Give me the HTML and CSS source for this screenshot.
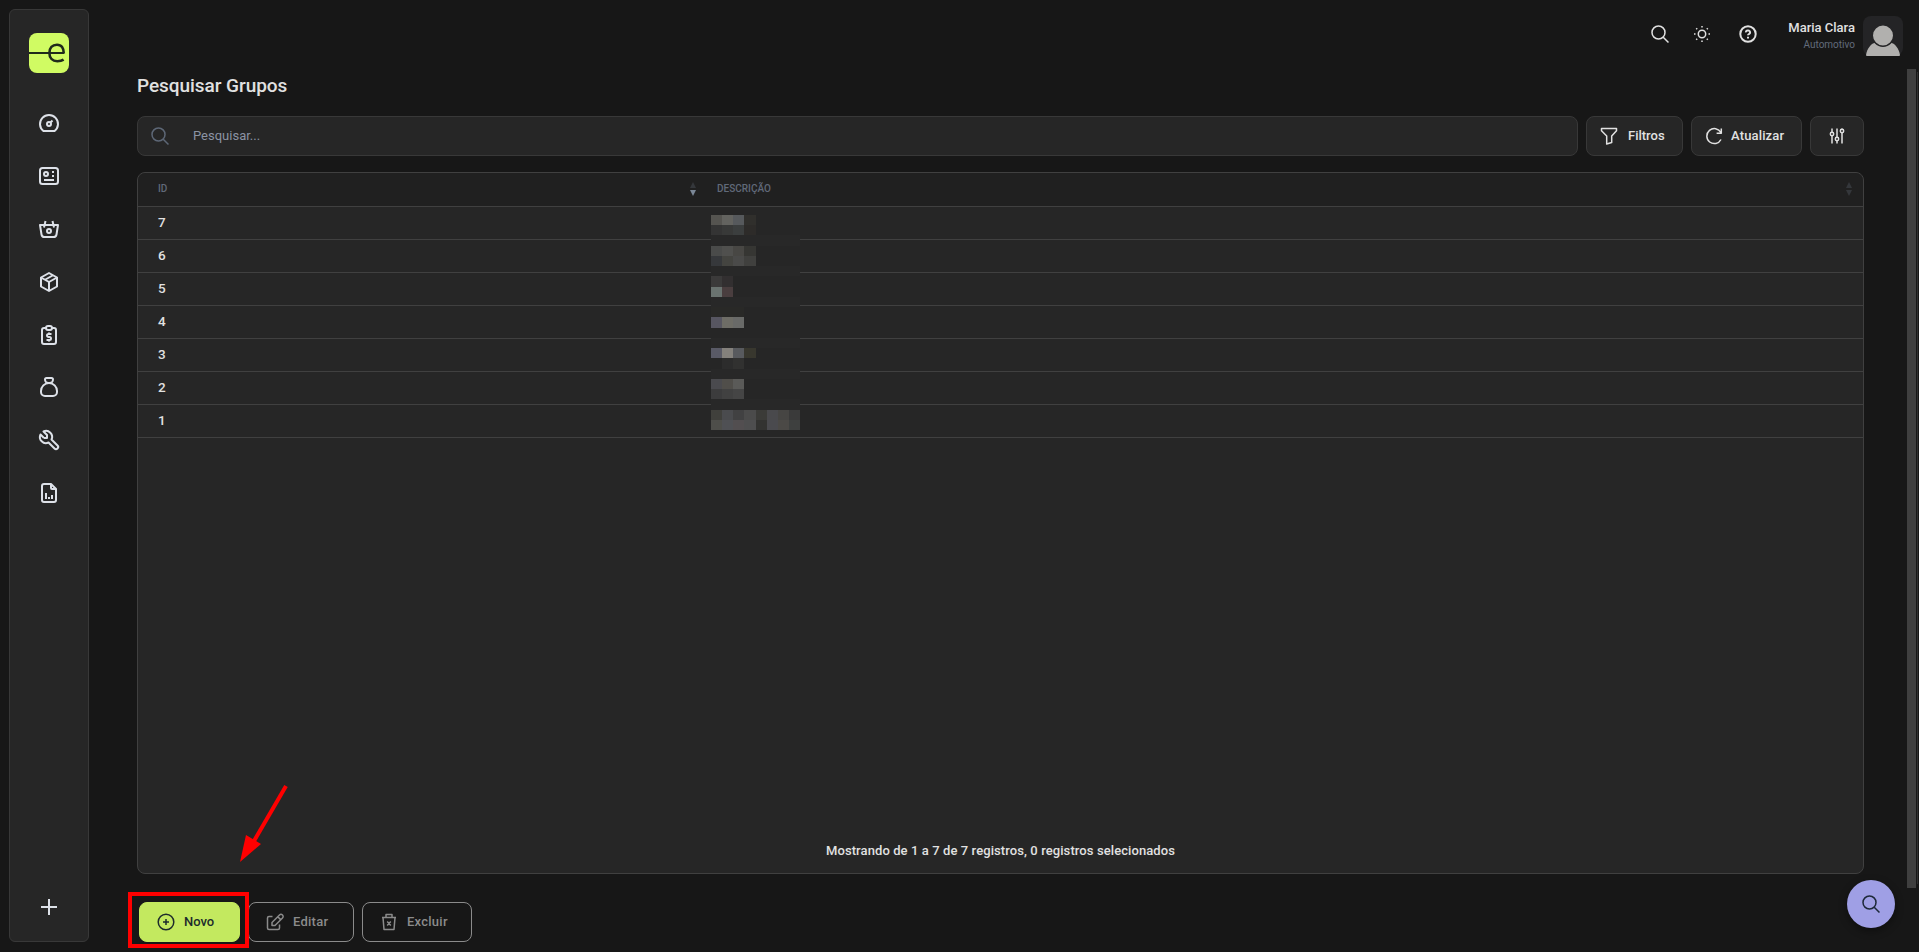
FILE: index.html
```
<!DOCTYPE html>
<html lang="pt-BR">
<head>
  <meta charset="UTF-8" />
  <meta name="viewport" content="width=device-width, initial-scale=1" />
  <title>Pesquisar Grupos</title>
  <link rel="stylesheet" href="styles.css">
</head>
<body>
  <div class="app">
    <!-- Sidebar -->
    <aside class="sidebar">
      <svg class="logo" viewBox="0 0 40 40">
        <rect width="40" height="40" rx="8" fill="#d0fb63"/>
        <path d="M0 20H35" stroke="#1f2a1b" stroke-width="2.200"/>
        <path d="M34.800 20.500C34.800 15 32.500 11.700 28 11.700C23.300 11.700 20.400 15 20.400 20C20.400 25 23.300 28.200 28.300 28.200C31 28.200 33 27.700 34.600 26.600" fill="none" stroke="#1f2a1b" stroke-width="2.600"/>
      </svg>
      <nav class="menu">
        <svg viewBox="0 0 24 24"><path d="M6.400 20a9 9 0 1 1 11.200 0Z"/><circle cx="12" cy="13" r="2"/><path d="M13.450 11.550L15.500 9.500"/></svg>
        <svg viewBox="0 0 24 24"><rect x="3" y="4" width="18" height="16" rx="2.500"/><circle cx="9" cy="10" r="2"/><path d="M15 8h2M15 12h2M7 16h10"/></svg>
        <svg viewBox="0 0 24 24"><path d="M3 8h18l-1.500 9.500a3 3 0 0 1-3 2.500h-9a3 3 0 0 1-3-2.500Z"/><path d="M7 10.500L8.500 4M17 10.500L15.500 4"/><circle cx="12" cy="14" r="2"/></svg>
        <svg viewBox="0 0 24 24"><path d="M12 3l8 4.500v9L12 21l-8-4.500v-9Z"/><path d="M12 12l8-4.500M12 12v9M12 12L4 7.500M16 5.250l-8 4.500"/></svg>
        <svg viewBox="0 0 24 24"><path d="M9 5H7a2 2 0 0 0-2 2v12a2 2 0 0 0 2 2h10a2 2 0 0 0 2-2V7a2 2 0 0 0-2-2h-2"/><rect x="9" y="3" width="6" height="4" rx="2"/><path d="M14.500 11h-3a1.500 1.500 0 0 0 0 3h1a1.500 1.500 0 0 1 0 3h-3M12 17v1.500M12 9.500v1.500"/></svg>
        <svg viewBox="0 0 24 24"><path d="M9.500 3h5A1.500 1.500 0 0 1 16 4.500 3.500 3.500 0 0 1 12.500 8h-1A3.500 3.500 0 0 1 8 4.500 1.500 1.500 0 0 1 9.500 3Z"/><path d="M4 17v-1a8 8 0 0 1 16 0v1a4 4 0 0 1-4 4H8a4 4 0 0 1-4-4Z"/></svg>
        <svg viewBox="0 0 24 24"><path d="M7 10h3V7L6.500 3.500a6 6 0 0 1 8 8l6 6a2 2 0 0 1-3 3l-6-6a6 6 0 0 1-8-8L7 10"/></svg>
        <svg viewBox="0 0 24 24"><path d="M14 3v4a1 1 0 0 0 1 1h4"/><path d="M17 21H7a2 2 0 0 1-2-2V5a2 2 0 0 1 2-2h7l5 5v11a2 2 0 0 1-2 2ZM9 18v-6M12 18v-2M15 18v-4"/></svg>
      </nav>
      <svg class="plus" viewBox="0 0 24 24"><path d="M12 4v16M4 12h16"/></svg>
    </aside>

    <div class="page">
      <!-- Top bar -->
      <header class="topbar">
        <svg class="icon" viewBox="0 0 24 24"><circle cx="10.500" cy="10.500" r="6.500"/><path d="M15.200 15.200L20.500 20.500"/></svg>
        <svg class="icon sun" viewBox="0 0 24 24"><circle cx="12" cy="12" r="3.700"/><path d="M4 12h1.500M12 4v1.500M20 12h-1.500M12 20v-1.500M6.200 6.200l1 1M17.800 6.200l-1 1M16.800 16.800l1 1M7.200 16.800l-1 1"/></svg>
        <svg class="icon help" viewBox="0 0 24 24"><circle cx="12" cy="12" r="7.700"/><path d="M9.900 10.400a2.100 1.900 0 1 1 3.300 1.500c-.8.500-1.200.7-1.200 1.400M12 14.800v1.600"/></svg>
        <div class="user">
          <strong>Maria Clara</strong>
          <span>Automotivo</span>
        </div>
        <svg class="avatar" viewBox="0 0 40 40">
          <rect width="40" height="40" rx="8" fill="#242426"/>
          <path d="M3 39C4 33 8 27 13 26.500H27C32 27 36 33 37 39Q37 40 36 40H4Q3 40 3 39Z" fill="#b1b0ae"/>
          <circle cx="20" cy="19.500" r="10.700" fill="#b1b0ae" stroke="#242426" stroke-width="1.400"/>
        </svg>
      </header>

      <main>
        <h1>Pesquisar Grupos</h1>

        <div class="toolbar">
          <div class="search">
            <svg class="icon" viewBox="0 0 24 24"><circle cx="10.500" cy="10.500" r="6.500"/><path d="M15.200 15.200L20.500 20.500"/></svg>
            <span>Pesquisar...</span>
          </div>
          <button class="tool filter"><svg class="icon" viewBox="0 0 24 24"><path d="M4.500 4.500h15v2.200l-4.800 5.300v6.500l-5 1.500v-8L4.500 6.700Z"/></svg><span>Filtros</span></button>
          <button class="tool refresh"><svg class="icon" viewBox="0 0 24 24"><path d="M19 15.500A7.500 7.500 0 1 1 18.900 8.500M19.300 4.500v4.700h-4.700"/></svg><span>Atualizar</span></button>
          <button class="tool options"><svg class="icon" viewBox="0 0 24 24"><circle cx="7" cy="10" r="1.700"/><circle cx="12" cy="15" r="1.700"/><circle cx="17" cy="7" r="1.700"/><path d="M7 4.500V8M7 12v7.500M12 4.500V13M12 17v2.500M17 4.500V5M17 9v10.500"/></svg></button>
        </div>

        <!-- Table -->
        <section class="grid">
          <div class="row head">
            <div class="cell"><span>ID</span><svg class="sort desc" viewBox="0 0 6 14"><path d="M3 0l3 6H0Z"/><path class="down" d="M3 14L0 8h6Z"/></svg></div>
            <div class="cell"><span>DESCRIÇÃO</span><svg class="sort" viewBox="0 0 6 14"><path d="M3 0l3 6H0Z"/><path class="down" d="M3 14L0 8h6Z"/></svg></div>
          </div>
          <div class="row"><div class="cell">7</div></div>
          <div class="row"><div class="cell">6</div></div>
          <div class="row"><div class="cell">5</div></div>
          <div class="row"><div class="cell">4</div></div>
          <div class="row"><div class="cell">3</div></div>
          <div class="row"><div class="cell">2</div></div>
          <div class="row"><div class="cell">1</div></div>
          <svg class="pixels" viewBox="0 0 89 215" shape-rendering="crispEdges">
            <rect width="89" height="215" fill="#262626"/>
            <path fill="#282828" d="M0 20h89v11H0zM0 51h89v10H0zM0 82h89v10H0zM0 123h89v10H0zM0 154h89v10H0zM0 184h89v11H0z"/>
            <!-- 7 -->
            <path fill="#555450" d="M0 0h11v10H0z"/><path fill="#63635f" d="M11 0h11v10H11z"/><path fill="#56595c" d="M22 0h11v10H22z"/><path fill="#302f2c" d="M33 0h12v10H33z"/>
            <path fill="#343434" d="M0 10h11v10H0z"/><path fill="#383938" d="M11 10h11v10H11z"/><path fill="#3b3e3e" d="M22 10h11v10H22z"/><path fill="#2d2b29" d="M33 10h12v10H33z"/>
            <!-- 6 -->
            <path fill="#4a4b4a" d="M0 31h11v10H0z"/><path fill="#50504e" d="M11 31h11v10H11z"/><path fill="#484744" d="M22 31h11v10H22z"/><path fill="#363633" d="M33 31h12v10H33z"/>
            <path fill="#36383b" d="M0 41h11v10H0z"/><path fill="#444440" d="M11 41h11v10H11z"/><path fill="#4a4a49" d="M22 41h11v10H22z"/><path fill="#40403e" d="M33 41h12v10H33z"/>
            <!-- 5 -->
            <path fill="#3b3a3a" d="M0 61h11v11H0z"/><path fill="#322f30" d="M11 61h11v11H11z"/>
            <path fill="#6a7370" d="M0 72h11v10H0z"/><path fill="#4a3e3f" d="M11 72h11v10H11z"/>
            <!-- 4 -->
            <path fill="#292927" d="M0 92h33v10H0z"/>
            <path fill="#575661" d="M0 102h11v11H0z"/><path fill="#6e6d66" d="M11 102h11v11H11z"/><path fill="#696a68" d="M22 102h11v11H22z"/>
            <!-- 3 -->
            <path fill="#595a66" d="M0 133h11v10H0z"/><path fill="#84817c" d="M11 133h11v10H11z"/><path fill="#585a5e" d="M22 133h11v10H22z"/><path fill="#38372e" d="M33 133h12v10H33z"/>
            <path fill="#2c2c2c" d="M11 143h11v11H11z"/><path fill="#313130" d="M22 143h11v11H22z"/>
            <!-- 2 -->
            <path fill="#4a4a4e" d="M0 164h11v10H0z"/><path fill="#504e4a" d="M11 164h11v10H11z"/><path fill="#5a5a58" d="M22 164h11v10H22z"/>
            <path fill="#3c3c3d" d="M0 174h11v10H0z"/><path fill="#414141" d="M11 174h11v10H11z"/><path fill="#454545" d="M22 174h11v10H22z"/>
            <!-- 1 -->
            <path fill="#40403c" d="M0 195h11v10H0z"/><path fill="#4a4b4e" d="M11 195h11v10H11z"/><path fill="#414142" d="M22 195h11v10H22z"/><path fill="#4b4b4b" d="M33 195h12v10H33z"/><path fill="#3b3b38" d="M45 195h11v10H45z"/><path fill="#49494c" d="M56 195h11v10H56z"/><path fill="#464543" d="M67 195h11v10H67z"/><path fill="#3a3a3a" d="M78 195h11v10H78z"/>
            <path fill="#4e4e4a" d="M0 205h11v10H0z"/><path fill="#4f5054" d="M11 205h11v10H11z"/><path fill="#524e50" d="M22 205h11v10H22z"/><path fill="#4e4e4f" d="M33 205h12v10H33z"/><path fill="#333331" d="M45 205h11v10H45z"/><path fill="#4a4a4e" d="M56 205h11v10H56z"/><path fill="#4b4946" d="M67 205h11v10H67z"/><path fill="#3e403f" d="M78 205h11v10H78z"/>
          </svg>
          <p class="info">Mostrando de 1 a 7 de 7 registros, 0 registros selecionados</p>
        </section>

        <div class="actions">
          <button class="action new"><svg class="icon" viewBox="0 0 24 24"><circle cx="12" cy="12" r="7.800"/><path d="M12 9v6M9 12h6"/></svg><span>Novo</span></button>
          <button class="action edit"><svg class="icon" viewBox="0 0 24 24"><path d="M9.500 6.500H6A1.500 1.500 0 0 0 4.500 8v10A1.500 1.500 0 0 0 6 19.500h9a1.500 1.500 0 0 0 1.500-1.500v-3.500M9 15.500v-3L16.500 5a1.800 1.800 0 0 1 3 3L12 15.500ZM14.800 6.800l2.800 2.800"/></svg><span>Editar</span></button>
          <button class="action delete"><svg class="icon" viewBox="0 0 24 24"><path d="M5 7.500h14M6 7.500l1 12h10l1-12M9 7.500v-3h6v3M10.200 11.500l3.600 4M13.800 11.500l-3.600 4"/></svg><span>Excluir</span></button>
        </div>
      </main>
    </div>
  </div>

  <div class="scrollbar"></div>
  <div class="drawer"></div>
  <button class="fab"><svg class="icon" viewBox="0 0 24 24"><circle cx="10.500" cy="10.500" r="6.500"/><path d="M15.200 15.200L20.500 20.500"/></svg></button>

  <!-- Tutorial highlight -->
  <div class="highlight"></div>
  <svg class="arrow" viewBox="0 0 50 80"><path d="M46 2L14 57" stroke="#f00" stroke-width="4"/><path d="M0 78L6 51L21 60Z" fill="#f00"/></svg>
</body>
</html>
```
FILE: styles.css
```
* {
  box-sizing: border-box;
}

body {
  margin: 0;
  height: 952px;
  overflow: hidden;
  background: #171717;
  color: #e1e1e1;
  font-family: Roboto, sans-serif;
  font-size: 13px;
  font-weight: 500;
}

svg {
  display: block;
  flex: none;
}

button {
  font: inherit;
  color: inherit;
  padding: 0;
}

.app {
  display: flex;
  height: 952px;
}

.sidebar {
  width: 80px;
  height: 933px;
  margin: 9px 0 0 9px;
  padding: 23px 0 22px;
  border: 1px solid #383838;
  border-radius: 6px;
  background: #262626;
  display: flex;
  flex-direction: column;
  align-items: center;
}

.logo {
  width: 40px;
  height: 40px;
}

.menu {
  display: flex;
  flex-direction: column;
  gap: 28.88px;
  margin-top: 38px;
}

.menu svg,
.plus {
  width: 24px;
  height: 24px;
  fill: none;
  stroke: #dde1e8;
  stroke-width: 2;
  stroke-linejoin: round;
}

.plus {
  margin-top: auto;
}

.page {
  width: 1775px;
  margin-left: 48px;
}

.topbar {
  height: 69px;
  width: 1766px;
  display: flex;
  justify-content: flex-end;
  align-items: flex-start;
  padding-top: 16px;
}

.icon {
  width: 24px;
  height: 24px;
  fill: none;
  stroke: currentColor;
  stroke-width: 1.5;
  stroke-linejoin: round;
}

.topbar .icon {
  margin: 6px 18px 0 0;
}

.topbar .help {
  margin: 6px 28px 0 4px;
  stroke-width: 2;
}

.user {
  width: 67px;
  text-align: right;
  white-space: nowrap;
}

.user strong,
.user span {
  display: block;
}

.user strong {
  font-weight: 500;
  line-height: 23px;
}

.user span {
  color: #626b7b;
  font-size: 10px;
  font-weight: 400;
  line-height: 11px;
}

.avatar {
  width: 40px;
  height: 40px;
  margin-left: 8px;
}

main {
  width: 1727px;
}

h1 {
  margin: 0;
  height: 47px;
  padding-top: 5px;
  font-size: 19px;
  font-weight: 500;
  line-height: 24px;
  letter-spacing: -0.05px;
}

.toolbar {
  display: flex;
  gap: 8px;
  height: 40px;
}

.search,
.tool {
  display: flex;
  align-items: center;
  border: 1px solid #383838;
  border-radius: 8px;
  background: #262626;
}

.search span,
.tool span,
.action span {
  padding-bottom: 2px;
}

.search {
  flex: 1;
  color: #8b93a3;
  font-weight: 400;
}

.search .icon {
  margin: 0 21px 0 10px;
  color: #5d6776;
}

.tool {
  padding-left: 10px;
}

.tool .icon {
  margin-right: 7px;
}

.filter {
  width: 97px;
}

.refresh {
  width: 111px;
}

.refresh .icon {
  margin-right: 5px;
}

.refresh span {
  letter-spacing: 0.15px;
}

.options {
  width: 54px;
  padding-left: 14px;
}

.grid {
  position: relative;
  height: 702px;
  margin-top: 16px;
  border: 1px solid #404040;
  border-radius: 8px;
  background: #262626;
  display: flex;
  flex-direction: column;
}

.row {
  display: grid;
  grid-template-columns: 559px 1fr;
  height: 33px;
  border-bottom: 1px solid #404040;
  font-size: 13.5px;
}

.cell {
  display: flex;
  align-items: center;
  padding: 0 0 2px 20px;
}

.head {
  height: 34px;
  background: #202020;
  border-radius: 8px 8px 0 0;
  color: #606979;
  font-size: 10px;
}

.sort {
  width: 6px;
  height: 14px;
  margin-left: auto;
  fill: #34373b;
}

.desc {
  margin-right: 1px;
}

.desc .down {
  fill: #7b8796;
}

.cell:nth-child(2) .sort {
  margin-right: 11px;
}

/* covers the hidden descriptions */
.pixels {
  position: absolute;
  left: 573px;
  top: 42px;
  width: 89px;
  height: 215px;
}

.info {
  margin: auto 0 12px;
  text-align: center;
  line-height: 20px;
  letter-spacing: 0.09px;
}

.actions {
  display: flex;
  gap: 8px;
  margin: 28px 0 0 2px;
}

.action {
  height: 40px;
  display: flex;
  align-items: center;
  border: 1px solid #8b8b8b;
  border-radius: 8px;
  background: none;
  color: #8b8b8b;
  padding-left: 14px;
}

.action .icon {
  margin-right: 6px;
}

.new {
  width: 101px;
  background: #c3e95f;
  border-color: #c3e95f;
  color: #1d2b2c;
}

.edit {
  width: 106px;
}

.delete {
  width: 110px;
}

.edit,
.delete {
  letter-spacing: 0.25px;
}

.scrollbar {
  position: absolute;
  left: 1907px;
  top: 69px;
  width: 9px;
  height: 819px;
  background: #3f3f3f;
}

.drawer {
  position: absolute;
  left: 1917px;
  top: 72px;
  width: 2px;
  height: 812px;
  border-left: 1px solid #303030;
}

.fab {
  position: absolute;
  left: 1847px;
  top: 880px;
  width: 48px;
  height: 48px;
  display: flex;
  align-items: center;
  justify-content: center;
  border: 0;
  border-radius: 50%;
  background: #9f9fe5;
  color: #1d2939;
  box-shadow: 0 3px 8px rgba(0, 0, 0, 0.4);
}

.highlight {
  position: absolute;
  left: 128px;
  top: 892px;
  width: 121px;
  height: 56px;
  border: 4px solid #f00;
}

.arrow {
  position: absolute;
  left: 240px;
  top: 784px;
  width: 50px;
  height: 80px;
}
```
